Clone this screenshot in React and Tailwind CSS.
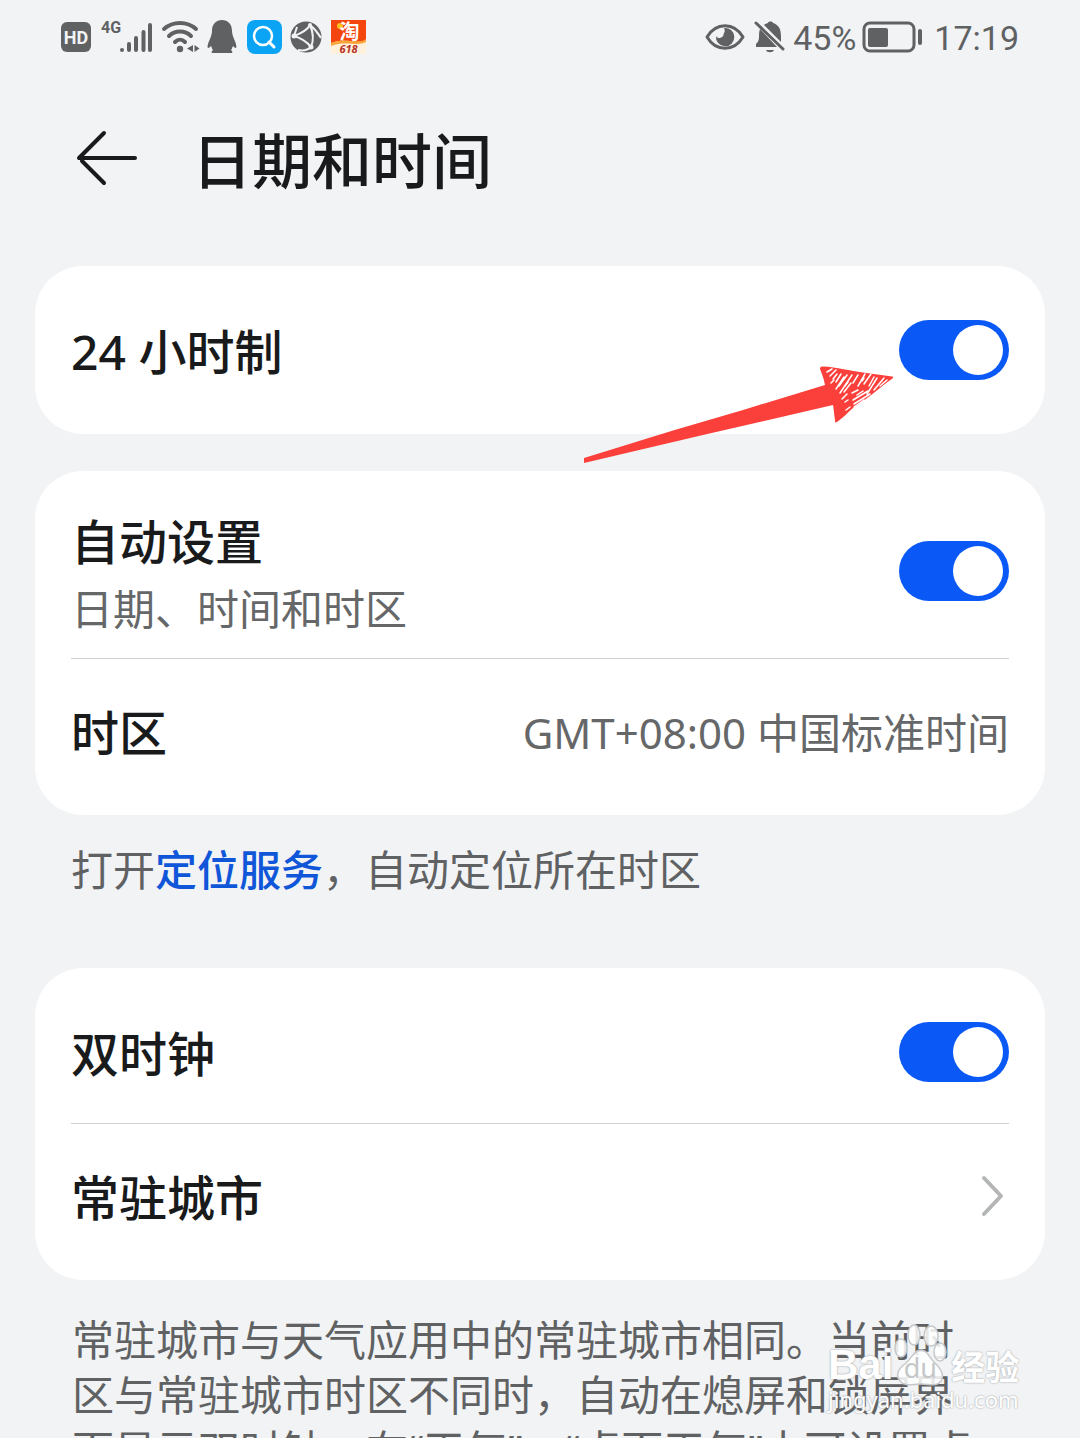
import React, { useState } from 'react';

const Toggle = ({ id }) => {
  const [on, setOn] = useState(true);

  return (
    <input
      id={id}
      type="checkbox"
      role="switch"
      checked={on}
      onChange={() => setOn(!on)}
      className="appearance-none shrink-0 flex items-center w-[110px] h-[60px] px-[6px] rounded-full bg-gray-300 checked:bg-[#0a59f7] checked:justify-end before:block before:content-[''] before:w-[50px] before:h-[50px] before:rounded-full before:bg-white"
    />
  );
};

const Card = ({ children, className = '' }) => (
  <section className={`bg-white rounded-[48px] px-9 py-3 divide-y divide-[#d2d2d3] ${className}`}>
    {children}
  </section>
);

const SwitchRow = ({ id, title, subtitle }) => (
  <div className={subtitle ? 'flex items-center justify-between h-[176px]' : 'flex items-center justify-between h-36'}>
    <label htmlFor={id} className={subtitle ? 'block' : 'block pt-1'}>
      <span className={subtitle ? 'block text-5xl leading-[76px] font-medium' : 'block text-5xl font-medium'}>{title}</span>
      {subtitle && <span className="block text-[42px] leading-[58px] text-[#666768]">{subtitle}</span>}
    </label>
    <Toggle id={id} />
  </div>
);

const StatusBar = () => (
  <div className="flex items-center justify-between h-[74px] pl-[61px] pr-[61px] text-[#606163]">
    <div className="flex items-center">
      <span className="flex items-center justify-center w-[30px] h-[30px] rounded-md bg-[#606163] text-[#f1f3f5] text-[18px] font-bold font-['Roboto',sans-serif]">HD</span>
      <span className="self-start ml-[10px] text-base leading-4 font-bold font-['Roboto',sans-serif]">4G</span>
      <svg width="34" height="32" viewBox="0 0 34 32" className="-ml-[2px]" stroke="currentColor" strokeWidth="4" strokeLinecap="round">
        <path d="M3 29h.01M10 23v6M17 17v12M24.500 11v18M31 4v25" />
      </svg>
      <svg width="40" height="34" viewBox="0 0 40 34" className="ml-2" fill="none" stroke="currentColor" strokeWidth="4" strokeLinecap="round">
        <path d="M3 9C12 1 26 1 35 9M8 16c6-6 16-6 22 0M14 22c3-3 7-3 10 0" />
        <circle cx="19" cy="29" r="3.200" fill="currentColor" stroke="none" />
        <path d="M32 25v7l-6-3.500zM33.500 25v7l5-3.500z" fill="currentColor" stroke="none" />
      </svg>
      <svg width="30" height="34" viewBox="0 0 30 34" className="ml-[6px]" fill="currentColor">
        <path d="M15 0C9 0 5 4 5 11c0 3-1 5-2 8-2 4-3 8-2 9 1 0 2-1 3-2 1 2 1 3 2 4-1 1-2 2-1 3h20c1-1 0-2-1-3 1-1 1-2 2-4 1 1 2 2 3 2 1-1 0-5-2-9-1-3-2-5-2-8 0-7-4-11-10-11z" />
      </svg>
      <svg width="35" height="34" viewBox="0 0 35 34" className="ml-[10px]" fill="none">
        <rect width="35" height="34" rx="8" fill="#0ba4f5" />
        <circle cx="16" cy="16" r="9" stroke="#fff" strokeWidth="2.500" />
        <path d="M22 22l5 5" stroke="#fff" strokeWidth="3" strokeLinecap="round" />
      </svg>
      <svg width="32" height="32" viewBox="0 0 32 32" className="ml-2" fill="none">
        <circle cx="16" cy="16" r="15.500" fill="currentColor" />
        <g stroke="#f1f3f5" strokeWidth="2">
          <path d="M4 15C12 12 18 8 20 4M4 15c7 2 13 6 17 11M20 4c3 7 4 15 1 22M20 4c5 4 8 8 11 13M4 15l3-9M21 26c-3 3-8 4-13 3" />
        </g>
        <g fill="#f1f3f5">
          <circle cx="4" cy="15" r="2.500" />
          <circle cx="20" cy="4" r="2" />
          <circle cx="21" cy="26" r="2.500" />
        </g>
      </svg>
      <span className="relative ml-[9px] w-[35px] h-[34px] bg-[#fff1dc] text-center">
        <svg width="35" height="34" viewBox="0 0 35 34" className="absolute inset-0">
          <path d="M0 0h35v20C28 25 16 17 0 23z" fill="#f4450f" />
          <path d="M0 23C15 17 27 25 35 19v3c-9 5-20-2-35 4z" fill="#fba63c" />
          <circle cx="9" cy="6" r="3" fill="#ffc21f" />
        </svg>
        <span className="relative block pl-[2px] text-xl leading-6 font-bold text-white">淘</span>
        <span className="relative block text-[11px] leading-[10px] font-bold italic text-[#b5352a]">618</span>
      </span>
    </div>

    <div className="flex items-center">
      <svg width="40" height="28" viewBox="0 0 40 28" fill="none">
        <path d="M2 14C11-1 29-1 38 14 29 29 11 29 2 14z" stroke="currentColor" strokeWidth="3" strokeLinejoin="round" />
        <path d="M19 5a9.200 9.200 0 1 1-8 8c1 2 4 3 6 1 2-1 1-2 2-4 1-1 1-3 0-5z" fill="currentColor" />
      </svg>
      <svg width="32" height="34" viewBox="0 0 32 34" className="ml-[9px]" fill="currentColor">
        <path d="M6 9c-1 3-1 5-1 8 0 3-1 5-3 7v3h21zM10 5l17 17c0-1 0-2 0-5 0-8-2-12-8-14 0-2-5-2-5 0-1 0-3 1-4 2zM12 30h8c-1 3-7 3-8 0z" />
        <path d="M2 3l27 26" stroke="currentColor" strokeWidth="3" strokeLinecap="round" />
      </svg>
      <span className="ml-[7px] pt-[2px] text-[34px] leading-10 font-['Roboto',sans-serif]">45%</span>
      <svg width="60" height="32" viewBox="0 0 60 32" className="ml-[6px]" fill="none">
        <rect x="2" y="2" width="50" height="28" rx="6" stroke="currentColor" strokeWidth="3" />
        <rect x="6" y="7" width="20" height="19" rx="2" fill="currentColor" />
        <path d="M58 10v12" stroke="currentColor" strokeWidth="4" strokeLinecap="round" />
      </svg>
      <span className="ml-3 pt-[2px] text-[34px] leading-10 font-['Roboto',sans-serif]">17:19</span>
    </div>
  </div>
);

// hand-drawn pointer towards the 24-hour switch
const PointerArrow = () => (
  <svg width="312" height="100" viewBox="0 0 312 100" className="absolute z-10 right-[150px] top-[98px] pointer-events-none">
    <path d="M1 94L90 66.500 160 46 242 21C241 15 239 10 237 5c0-2 1-2.500 3-2.500C254 3 267 7 280 8.500l29 4c1.500 0 1.500 1 .5 2C297 23 286 34 270 44c-6 5-10 10-16 14-2 1-2 0-2-2-1-5-1-10-2-15L120 71 1 99z" fill="#fb403b" />
    <g stroke="#fff" strokeWidth="1.500" strokeLinecap="round">
      <path d="M244 8l5-3M247 12l6-6M250 15l4-5M253 18l5-8M253 25l8-12M256 22l8-11M257 29l12-18M261 28l7-9M270 19l5-8M275 22l7-12M281 20l7-10M286 22l5-9M284 30l10-16M291 26l10-12M293 30l8-8M274 31l6-4M269 29l6-3M270 36l15-9M271 40l16-10M284 40l8-7M259 35l5-5M262 38l3-2M263 46l4-3M271 43l10-7" />
      <path d="M248 19l3-3M262 22l3-4M279 17l2-3M297 22l7-6" />
    </g>
  </svg>
);

const Watermark = () => (
  <div className="absolute z-10 right-[56px] top-[1322px] w-[196px] text-white pointer-events-none [text-shadow:0_0_2px_#8f9193]">
    <div className="flex items-end h-16">
      <span className="text-[42px] leading-[42px] font-bold font-['Liberation_Sans',sans-serif]">Bai</span>
      <span className="relative w-[54px] h-[62px] shrink-0">
        <svg width="54" height="62" viewBox="0 0 54 62" className="absolute inset-0" fill="#fff" fillOpacity=".85" stroke="#c6c8ca" strokeWidth="1.500">
          <ellipse cx="8" cy="24" rx="6" ry="9" />
          <ellipse cx="21" cy="11" rx="6" ry="10" />
          <ellipse cx="38" cy="12" rx="7" ry="10" />
          <ellipse cx="47" cy="28" rx="6" ry="9" />
          <path d="M28 26c-7 0-9 8-15 13-8 6-11 12-6 18 5 6 12 3 21 3s16 3 20-3c4-6 0-12-6-18-6-5-7-13-14-13z" />
        </svg>
        <span className="relative block pt-[29px] text-center text-[27px] leading-[30px] text-[#c4c6c8] [text-shadow:none]">du</span>
      </span>
      <span className="ml-1 text-[34px] leading-[38px] font-bold">经验</span>
    </div>
    <div className="text-[22px] leading-[26px]">jingyan.baidu.com</div>
  </div>
);

export default function App() {
  return (
    <div
      lang="zh-CN"
      className="relative h-screen overflow-hidden bg-[#f1f3f5] text-[#191a1b] font-['Noto_Sans','Noto_Sans_CJK_SC',sans-serif]"
    >
      <StatusBar />

      <header className="flex items-center h-[174px] px-[76px]">
        <button type="button" aria-label="返回" className="-mt-[6px]">
          <svg width="62" height="56" viewBox="0 0 62 56" fill="none" stroke="currentColor" strokeWidth="4" strokeLinecap="round" strokeLinejoin="round">
            <path d="M28 3L3 28H59M6 31l22 22" />
          </svg>
        </button>
        <h1 className="ml-[54px] text-[60px] leading-[80px] font-medium">日期和时间</h1>
      </header>

      <main className="px-[35px] pt-[18px]">
        <div className="relative">
          <Card>
            <SwitchRow id="hour24" title="24 小时制" />
          </Card>
          <PointerArrow />
        </div>

        <Card className="mt-[37px]">
          <SwitchRow id="auto" title="自动设置" subtitle="日期、时间和时区" />
          <div className="flex items-center justify-between h-36">
            <span className="pt-1 text-5xl font-medium">时区</span>
            <span className="pt-[2px] text-[42px] text-[#666768]">GMT+08:00 中国标准时间</span>
          </div>
        </Card>

        <p className="mt-[27px] px-9 text-[42px] leading-[55px] text-[#606163]">
          打开<a href="#location" className="font-medium text-[#0f56d9]">定位服务</a>，自动定位所在时区
        </p>

        <Card className="mt-[71px]">
          <SwitchRow id="dual" title="双时钟" />
          <a href="#city" className="flex items-center justify-between h-36">
            <span className="pt-1 text-5xl font-medium">常驻城市</span>
            <svg width="30" height="42" viewBox="0 0 30 42" fill="none" stroke="#b4b5b7" strokeWidth="4" strokeLinecap="round" strokeLinejoin="round">
              <path d="M5 3l17 18L5 39" />
            </svg>
          </a>
        </Card>

        <p className="mt-8 pl-[37px] pr-[61px] text-[42px] leading-[55px] text-[#606163]">
          常驻城市与天气应用中的常驻城市相同。当前时区与常驻城市时区不同时，自动在熄屏和锁屏界面显示双时钟，在“天气”、“桌面天气”中可设置桌面时钟。
        </p>
      </main>

      <Watermark />
    </div>
  );
}
